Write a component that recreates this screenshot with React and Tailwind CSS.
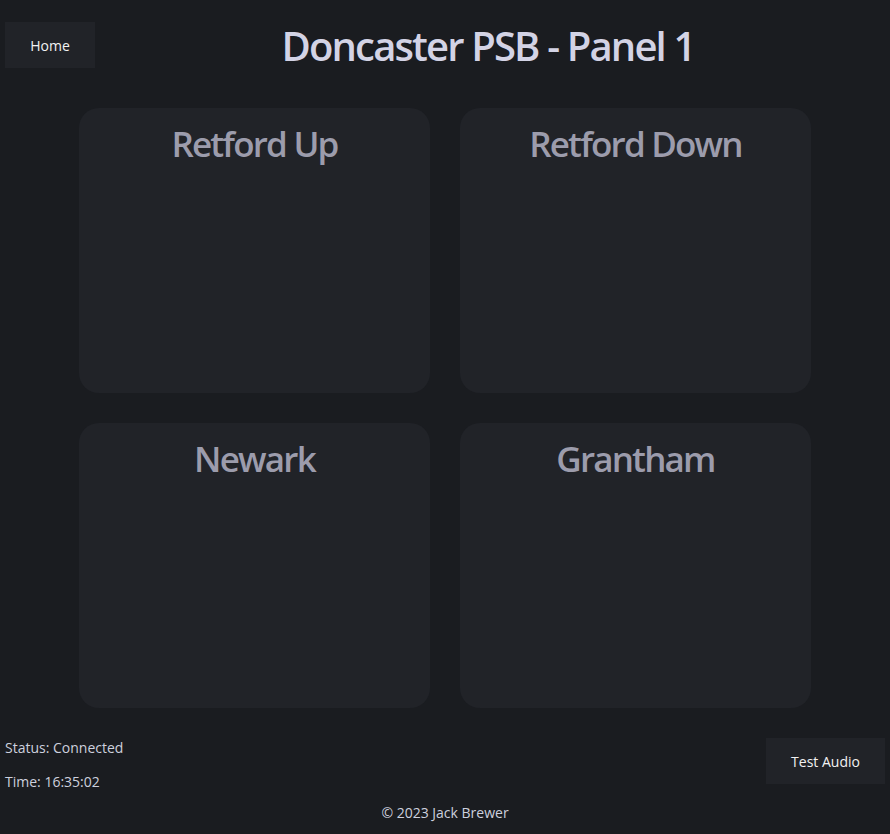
export default function App() {
  const panels = ["Retford Up", "Retford Down", "Newark", "Grantham"];

  return (
    <div
      className="min-h-[834px] bg-[#1a1c20] text-[#cfd0e0]"
      style={{ fontFamily: '"Open Sans", "Noto Sans", sans-serif' }}
    >
      <header className="flex items-start pt-[19px]">
        <button className="ml-[5px] mt-[3px] h-[46px] w-[90px] bg-[#212328] text-[14px] text-[#f2f2f2]">
          Home
        </button>
        <h1 className="flex-1 pr-[9px] text-center text-[40px] leading-[1.362] font-semibold tracking-[-1.85px] text-[#d3d3e5]">
          Doncaster PSB - Panel 1
        </h1>
      </header>

      <main className="mt-[35px] grid grid-cols-[351px_351px] justify-center gap-x-[30px] gap-y-[30px]">
        {panels.map((name) => (
          <div key={name} className="h-[285px] rounded-[20px] bg-[#212328] pt-[12px]">
            <h2 className="text-center text-[35px] leading-[1.362] font-semibold tracking-[-1.8px] text-[#9c9cac]">
              {name}
            </h2>
          </div>
        ))}
      </main>

      <div className="mt-[30px] flex items-start justify-between px-[5px] text-[14px] leading-[19px] text-[#cdd0de]">
        <div className="flex flex-col gap-[15px]">
          <p>Status: Connected</p>
          <p>Time: 16:35:02</p>
        </div>
        <button className="h-[46px] w-[119px] bg-[#212328] text-[14px] text-[#f2f2f2]">Test Audio</button>
      </div>

      <footer className="mt-[12px] pb-[12px] text-center text-[14px] leading-[19px] text-[#cdd0de]">
        © 2023 Jack Brewer
      </footer>
    </div>
  );
}
